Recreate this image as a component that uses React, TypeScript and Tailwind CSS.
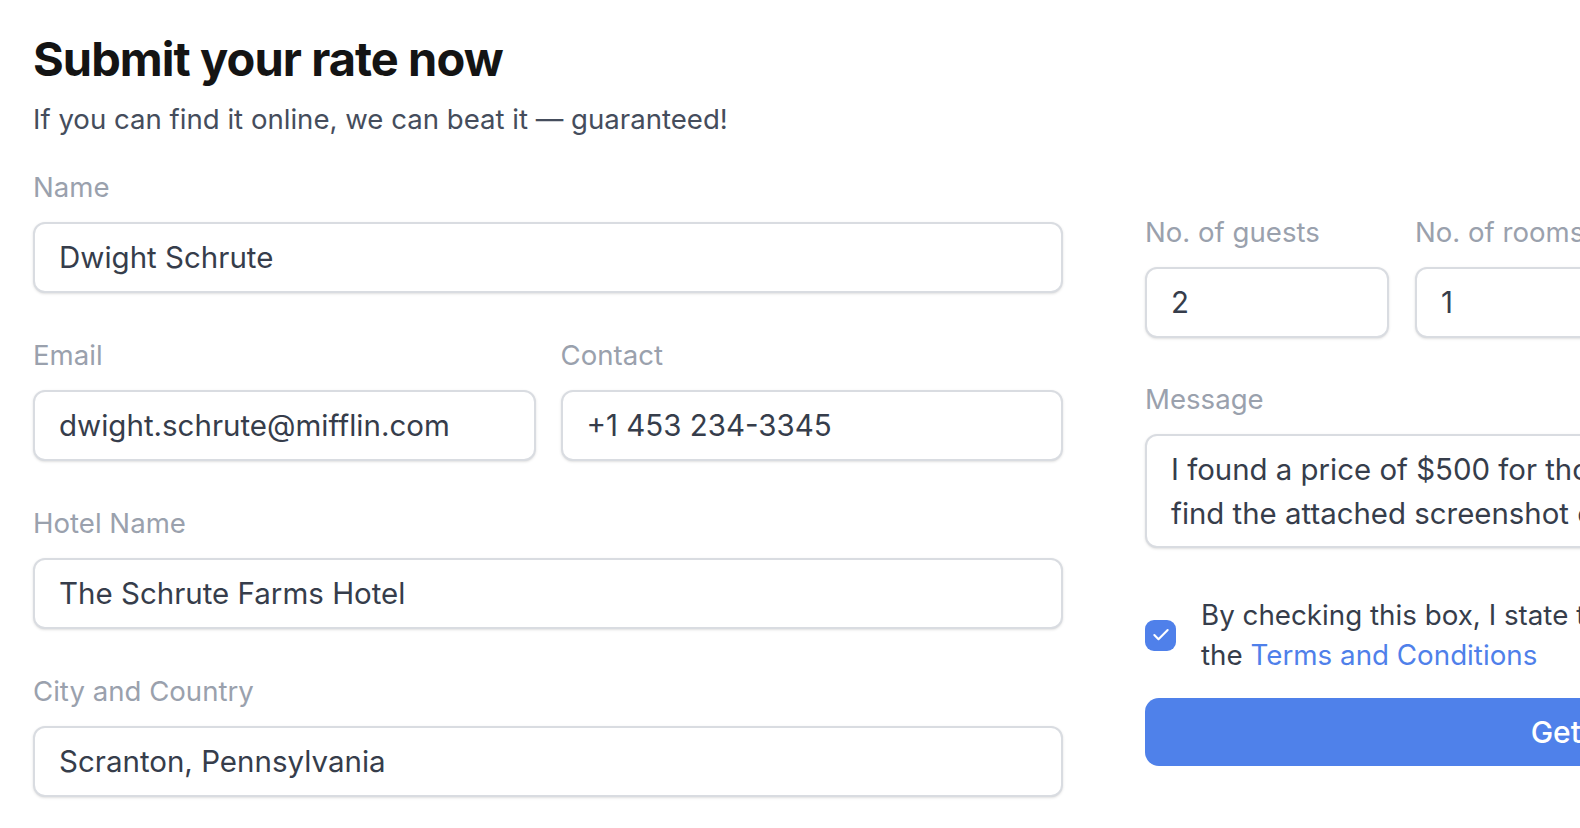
import React from 'react';
import { Check } from 'lucide-react';

const font = { fontFamily: 'Inter, "Noto Sans", sans-serif' };

function Field({ label, value, className = '' }: { label: string; value: string; className?: string }) {
  return (
    <div className={className}>
      <label className="block text-[27.6px] leading-[40px] text-[#9aa1ad]">{label}</label>
      <div className="mt-[15px] flex h-[71px] items-center rounded-[12px] border-2 border-[#d9dce1] bg-white px-[24px] text-[29.5px] text-[#363d4b] shadow-sm whitespace-nowrap overflow-hidden">
        {value}
      </div>
    </div>
  );
}

export default function App() {
  return (
    <div className="h-[828px] w-[1580px] overflow-hidden bg-white" style={font}>
      <div className="flex w-[2300px] pl-[33px]">
        {/* left column */}
        <div className="w-[1030px] shrink-0">
          <h1 className="mt-[31px] text-[47px] font-bold leading-[56px] tracking-[-0.02em] text-[#141414]">
            Submit your rate now
          </h1>
          <p className="mt-[12px] text-[27.6px] leading-[40px] text-[#454d5c]">
            If you can find it online, we can beat it — guaranteed!
          </p>

          <Field className="mt-[28px]" label="Name" value="Dwight Schrute" />

          <div className="mt-[42px] grid grid-cols-2 gap-x-[25px]">
            <Field label="Email" value="dwight.schrute@mifflin.com" />
            <Field label="Contact" value="+1 453 234-3345" />
          </div>

          <Field className="mt-[42px]" label="Hotel Name" value="The Schrute Farms Hotel" />
          <Field className="mt-[42px]" label="City and Country" value="Scranton, Pennsylvania" />
        </div>

        {/* right column */}
        <div className="ml-[82px] mt-[212px] w-[1010px] shrink-0">
          <div className="flex gap-x-[26px]">
            <Field className="w-[244px]" label="No. of guests" value="2" />
            <Field className="w-[244px]" label="No. of rooms" value="1" />
            <Field className="w-[244px]" label="No. of nights" value="3" />
          </div>

          <div className="mt-[41px]">
            <label className="block text-[27.6px] leading-[40px] text-[#9aa1ad]">Message</label>
            <div className="mt-[15px] h-[114px] overflow-hidden rounded-[12px] border-2 border-[#d9dce1] bg-white px-[24px] pt-[12px] text-[29.4px] leading-[44px] text-[#363d4b] shadow-sm whitespace-nowrap">
              I found a price of $500 for those dates on another website. Please
              <br />
              find the attached screenshot of the offer for your reference.
            </div>
          </div>

          <div className="mt-[47px] flex items-center gap-x-[25px]">
            <div className="flex h-[31px] w-[31px] shrink-0 items-center justify-center rounded-[9px] bg-[#4f80ea]">
              <Check className="h-[20px] w-[20px] text-white" strokeWidth={2.5} />
            </div>
            <p className="text-[27.75px] leading-[40px] text-[#363d4b] whitespace-nowrap">
              By checking this box, I state that I have read and agree to
              <br />
              the <span className="text-[#4f80ea]">Terms and Conditions</span>
            </p>
          </div>

          <button className="mt-[23px] flex h-[68px] w-full items-center justify-center rounded-[14px] bg-[#4f81ea] text-[30px] font-medium text-white">
            Get the best rate
          </button>
        </div>
      </div>
    </div>
  );
}
